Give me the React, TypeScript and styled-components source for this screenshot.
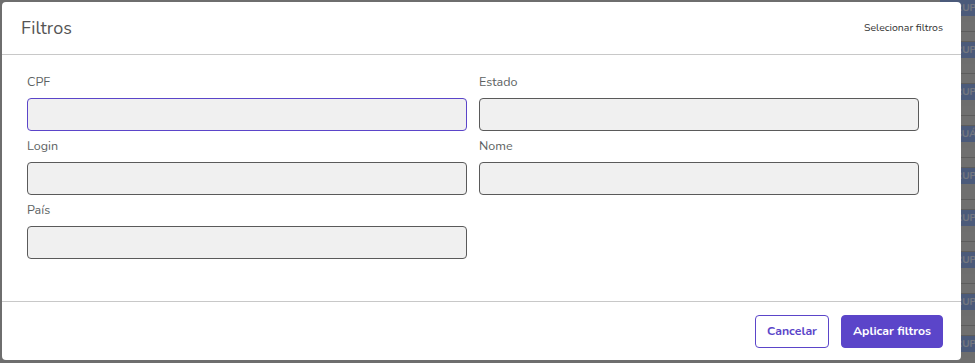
import React from 'react';
import styled, { createGlobalStyle } from 'styled-components';

const GlobalStyle = createGlobalStyle`
    html, body {
        margin: 0;
        padding: 0;
        width: 975px;
        height: 363px;
        overflow: hidden;
        font-family: "Nunito", "Lato", "Open Sans", sans-serif;
    }
`;

const Page = styled.div`
    position: relative;
    width: 975px;
    height: 363px;
    background: #dcdcdc;
    overflow: hidden;
`;

const Table = styled.div`
    display: flex;
    flex-direction: column;
    padding-left: 940px;
`;

const Group = styled.div`
    display: flex;
    flex-direction: column;
`;

const HeadCell = styled.div`
    height: 16px;
    background: #97b4f4;
    color: #e8eeff;
    font-size: 10px;
    font-weight: 700;
    line-height: 16px;
    padding-left: 8px;
    margin-bottom: 6px;
    white-space: nowrap;
`;

const RowCell = styled.div`
    height: 9px;
    background: #dedede;
    border-bottom: 1px solid #b8b8b8;
`;

const Overlay = styled.div`
    position: absolute;
    inset: 0;
    background: rgba(0, 0, 0, 0.5);
`;

const Modal = styled.div`
    position: absolute;
    top: 2px;
    left: 2px;
    width: 959px;
    height: 358px;
    background: #ffffff;
    border-radius: 4px;
    display: flex;
    flex-direction: column;
`;

const Header = styled.div`
    height: 52px;
    display: flex;
    align-items: center;
    justify-content: space-between;
    padding: 0 18px 0 19px;
    border-bottom: 1px solid #c8c8c8;
`;

const Title = styled.h2`
    margin: 0;
    font-size: 18px;
    font-weight: 400;
    color: #555555;
`;

const HeaderLink = styled.span`
    font-size: 10.5px;
    color: #333333;
    margin-top: -2px;
`;

const Body = styled.div`
    flex: 1;
    display: grid;
    grid-template-columns: 440px 440px;
    column-gap: 12px;
    row-gap: 6px;
    align-content: start;
    padding: 18px 0 0 25px;
`;

const Field = styled.div`
    display: flex;
    flex-direction: column;
`;

const Label = styled.label`
    font-size: 12.5px;
    line-height: 18px;
    color: #5c6262;
    margin-bottom: 7px;
`;

const Input = styled.input<{ $focused?: boolean }>`
    height: 33px;
    box-sizing: border-box;
    border-radius: 4px;
    border: 1px solid ${p => (p.$focused ? '#5b45c9' : '#5a5a5a')};
    background: #f0f0f0;
    outline: none;
    padding: 0 10px;
    font-family: inherit;
`;

const Footer = styled.div`
    height: 58px;
    display: flex;
    align-items: center;
    justify-content: flex-end;
    gap: 12px;
    padding-right: 18px;
    border-top: 1px solid #c8c8c8;
`;

const Button = styled.button<{ $primary?: boolean }>`
    height: 33px;
    box-sizing: border-box;
    padding: 0 11px;
    border-radius: 4px;
    font-family: inherit;
    font-size: 12.3px;
    font-weight: 700;
    border: 1px solid #5b45c9;
    color: ${p => (p.$primary ? '#ffffff' : '#5b45c9')};
    background: ${p => (p.$primary ? '#5b45c9' : '#ffffff')};
`;

const groups = ['GRUPO', 'GRUPO', 'GRUPO', 'USUÁRIO', 'GRUPO', 'GRUPO', 'GRUPO', 'GRUPO', 'GRUPO'];

const fields = [
    { label: 'CPF', focused: true },
    { label: 'Estado' },
    { label: 'Login' },
    { label: 'Nome' },
    { label: 'País' },
];

export default function App() {
    return (
        <Page>
            <GlobalStyle />
            <Table>
                {groups.map((g, i) => (
                    <Group key={i}>
                        <HeadCell>{g}</HeadCell>
                        <RowCell />
                        <RowCell />
                    </Group>
                ))}
            </Table>
            <Overlay />
            <Modal>
                <Header>
                    <Title>Filtros</Title>
                    <HeaderLink>Selecionar filtros</HeaderLink>
                </Header>
                <Body>
                    {fields.map(f => (
                        <Field key={f.label}>
                            <Label>{f.label}</Label>
                            <Input $focused={f.focused} />
                        </Field>
                    ))}
                </Body>
                <Footer>
                    <Button>Cancelar</Button>
                    <Button $primary>Aplicar filtros</Button>
                </Footer>
            </Modal>
        </Page>
    );
}
